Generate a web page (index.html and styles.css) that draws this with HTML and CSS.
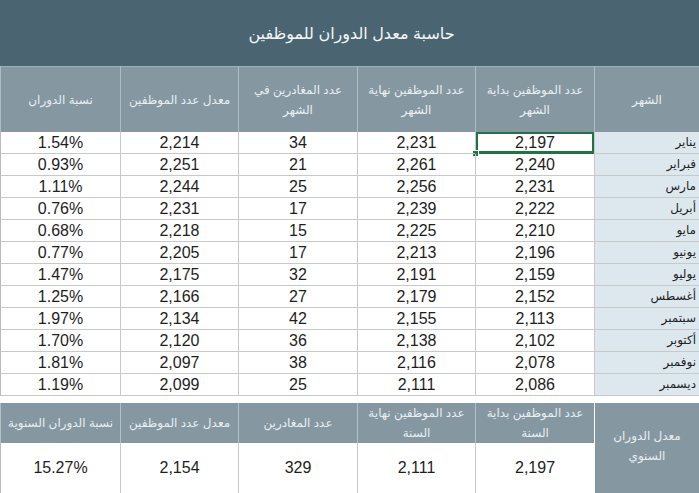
FILE: index.html
```html
<!DOCTYPE html>
<html lang="ar" dir="rtl">
<head>
<meta charset="utf-8">
<title>حاسبة معدل الدوران للموظفين</title>
<link rel="stylesheet" href="styles.css">
</head>
<body>
<div class="sheet">
  <div class="title">حاسبة معدل الدوران للموظفين</div>
  <div class="grid">
    <div class="hd">الشهر</div>
    <div class="hd">عدد الموظفين بداية<br>الشهر</div>
    <div class="hd">عدد الموظفين نهاية<br>الشهر</div>
    <div class="hd">عدد المغادرين في<br>الشهر</div>
    <div class="hd">معدل عدد الموظفين</div>
    <div class="hd last">نسبة الدوران</div>

    <div class="m">يناير</div><div class="c sel">2,197<span class="handle"></span></div><div class="c">2,231</div><div class="c">34</div><div class="c">2,214</div><div class="c last">1.54%</div>
    <div class="m">فبراير</div><div class="c">2,240</div><div class="c">2,261</div><div class="c">21</div><div class="c">2,251</div><div class="c last">0.93%</div>
    <div class="m">مارس</div><div class="c">2,231</div><div class="c">2,256</div><div class="c">25</div><div class="c">2,244</div><div class="c last">1.11%</div>
    <div class="m">أبريل</div><div class="c">2,222</div><div class="c">2,239</div><div class="c">17</div><div class="c">2,231</div><div class="c last">0.76%</div>
    <div class="m">مايو</div><div class="c">2,210</div><div class="c">2,225</div><div class="c">15</div><div class="c">2,218</div><div class="c last">0.68%</div>
    <div class="m">يونيو</div><div class="c">2,196</div><div class="c">2,213</div><div class="c">17</div><div class="c">2,205</div><div class="c last">0.77%</div>
    <div class="m">يوليو</div><div class="c">2,159</div><div class="c">2,191</div><div class="c">32</div><div class="c">2,175</div><div class="c last">1.47%</div>
    <div class="m">أغسطس</div><div class="c">2,152</div><div class="c">2,179</div><div class="c">27</div><div class="c">2,166</div><div class="c last">1.25%</div>
    <div class="m">سبتمبر</div><div class="c">2,113</div><div class="c">2,155</div><div class="c">42</div><div class="c">2,134</div><div class="c last">1.97%</div>
    <div class="m">أكتوبر</div><div class="c">2,102</div><div class="c">2,138</div><div class="c">36</div><div class="c">2,120</div><div class="c last">1.70%</div>
    <div class="m">نوفمبر</div><div class="c">2,078</div><div class="c">2,116</div><div class="c">38</div><div class="c">2,097</div><div class="c last">1.81%</div>
    <div class="m">ديسمبر</div><div class="c">2,086</div><div class="c">2,111</div><div class="c">25</div><div class="c">2,099</div><div class="c last">1.19%</div>
  </div>

  <div class="summary">
    <div class="shd span">معدل الدوران<br>السنوي</div>
    <div class="shd">عدد الموظفين بداية<br>السنة</div>
    <div class="shd">عدد الموظفين نهاية<br>السنة</div>
    <div class="shd">عدد المغادرين</div>
    <div class="shd">معدل عدد الموظفين</div>
    <div class="shd last">نسبة الدوران السنوية</div>
    <div class="sv">2,197</div>
    <div class="sv">2,111</div>
    <div class="sv">329</div>
    <div class="sv">2,154</div>
    <div class="sv last">15.27%</div>
  </div>
</div>
</body>
</html>
```

FILE: styles.css
```css
html, body {
  margin: 0;
  padding: 0;
  background: #ffffff;
}
body {
  font-family: "Liberation Sans", Arial, "DejaVu Sans", sans-serif;
  color: #1e1e1e;
  width: 699px;
  height: 493px;
  overflow: hidden;
}
.sheet {
  direction: rtl;
  width: 699px;
}
.title {
  height: 66px;
  background: #4a6571;
  color: #f4f7f8;
  font-size: 16px;
  display: flex;
  align-items: center;
  justify-content: center;
  box-sizing: border-box;
  padding-left: 4px;
}
.grid,
.summary {
  display: grid;
  grid-template-columns: 105px 119px 118px 119px 118px 120px;
}
.hd {
  height: 66px;
  box-sizing: border-box;
  background: #8598a2;
  color: #e9eef1;
  font-size: 12px;
  line-height: 20px;
  text-align: center;
  display: flex;
  align-items: center;
  justify-content: center;
  border-left: 1px solid #aebcc3;
  border-top: 1px solid #9fb0b9;
}
.hd.last,
.c.last,
.shd.last,
.sv.last {
  border-left: 1px solid #b9b9b9;
}
.hd.last { border-left-color: #aebcc3; }
.c,
.m {
  height: 22px;
  box-sizing: border-box;
  border-bottom: 1px solid #c9c9c9;
  border-left: 1px solid #c9c9c9;
}
.c {
  font-size: 16px;
  line-height: 21px;
  text-align: center;
  position: relative;
}
.m {
  background: #dde8ee;
  font-size: 12px;
  line-height: 21px;
  text-align: right;
  padding-right: 3px;
}
.sel {
  box-shadow: inset 0 0 0 2px #217346;
  border-bottom-color: #217346;
}
.handle {
  position: absolute;
  left: -3px;
  bottom: -3px;
  width: 5px;
  height: 5px;
  background: #217346;
  border: 1px solid #ffffff;
  box-sizing: content-box;
  margin: -1px;
}
.summary {
  margin-top: 7px;
  grid-template-rows: 40px 50px;
}
.shd {
  background: #8598a2;
  color: #e9eef1;
  font-size: 12px;
  line-height: 20px;
  text-align: center;
  display: flex;
  align-items: center;
  justify-content: center;
  border-left: 1px solid #b3c1c7;
  box-sizing: border-box;
}
.shd.span {
  grid-row: span 2;
  border-left: 1px solid #ffffff;
  padding-bottom: 4px;
}
.shd.last { border-left-color: #b3c1c7; }
.sv {
  font-size: 16px;
  display: flex;
  align-items: center;
  justify-content: center;
  border-left: 1px solid #c9c9c9;
  box-sizing: border-box;
}
```
